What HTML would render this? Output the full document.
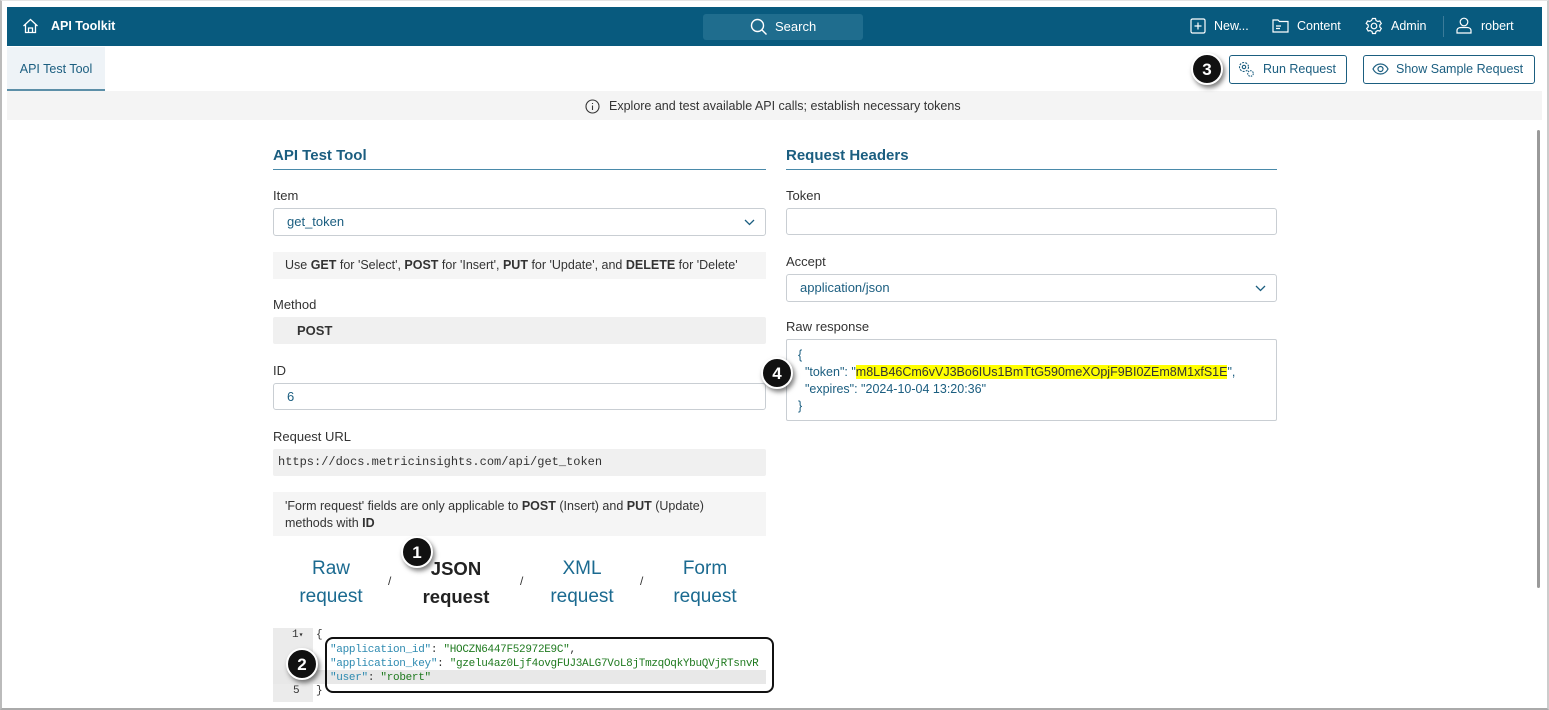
<!DOCTYPE html>
<html><head><meta charset="utf-8"><style>
*{box-sizing:border-box;margin:0;padding:0}
body{width:1549px;height:710px;overflow:hidden;background:#fff;font-family:"Liberation Sans",sans-serif;font-size:13px;color:#333;position:relative}
.a{position:absolute}
.frame{left:0;top:0;width:1549px;height:710px;border:1px solid #e4e4e4;border-left:2px solid #bbb;border-bottom:2px solid #aaa;border-right:2px solid #ccc}
.top{left:7px;top:7px;width:1535px;height:39px;background:#085a7e;color:#fff}
.lbl{font-size:13px;color:#333}
.inp{border:1px solid #c9ced3;border-radius:3px;background:#fff;height:28px;color:#1b5e80;padding-left:13px;line-height:26px}
.gray{background:#f0f0f0;border-radius:2px}
.note{background:#f5f5f5}
.h{font-size:15px;font-weight:bold;color:#1b5e80;border-bottom:1px solid #4a8aaa;padding-bottom:5px}
.badge{width:32px;height:32px;border-radius:50%;background:#111;color:#fff;font-size:17px;font-weight:bold;text-align:center;line-height:30px;border:2px solid #fff;box-shadow:2px 3px 5px rgba(0,0,0,.5)}
.btn{border:1px solid #1b5e80;border-radius:3px;height:29px;color:#1b5e80;font-size:13px;line-height:27px;background:#fff}
.tab{font-size:19px;color:#1b6a90;text-align:center;line-height:28px}
.mono{font-family:"Liberation Mono",monospace;font-size:11px}
</style></head><body>
<div class="a frame"></div>
<div class="a top">
 <svg class="a" style="left:15px;top:11px" width="17" height="16" viewBox="0 0 17 16" fill="none" stroke="#fff" stroke-width="1.3"><path d="M1.5 8 8.5 1.5 15.5 8M3.5 6.5V14.5H13.5V6.5M6.5 14.5V10H10.5V14.5"/></svg>
 <div class="a" style="left:44px;top:12px;font-weight:bold;font-size:12.5px">API Toolkit</div>
 <div class="a" style="left:696px;top:7px;width:160px;height:26px;background:#1f6d8e;border-radius:3px"></div>
 <svg class="a" style="left:743px;top:11px" width="18" height="18" viewBox="0 0 18 18" fill="none" stroke="#fff" stroke-width="1.4"><circle cx="7.5" cy="7.5" r="6"/><path d="M12 12 16.5 16.5"/></svg>
 <div class="a" style="left:768px;top:12px">Search</div>
 <svg class="a" style="left:1183px;top:11px" width="16" height="16" viewBox="0 0 16 16" fill="none" stroke="#fff" stroke-width="1.2"><rect x="1" y="1" width="14" height="14" rx="1.5"/><path d="M8 4.5V11.5M4.5 8H11.5"/></svg>
 <div class="a" style="left:1207px;top:12px;font-size:12.5px">New...</div>
 <svg class="a" style="left:1265px;top:11px" width="17" height="15" viewBox="0 0 17 15" fill="none" stroke="#fff" stroke-width="1.2"><path d="M1 2H6L7.5 3.5H16V14H1Z"/><path d="M4 8H9M4 10.5H8"/></svg>
 <div class="a" style="left:1290px;top:12px;font-size:12.5px">Content</div>
 <svg class="a" style="left:1358px;top:10px" width="18" height="18" viewBox="0 0 18 18" fill="none" stroke="#fff" stroke-width="1.2"><circle cx="9" cy="9" r="2.8"/><path d="M7.5 1.5h3l.5 2 1.8 1 2-.6 1.5 2.6-1.5 1.5v2l1.5 1.5-1.5 2.6-2-.6-1.8 1-.5 2h-3l-.5-2-1.8-1-2 .6-1.5-2.6 1.5-1.5v-2L1.2 6.5l1.5-2.6 2 .6 1.8-1z"/></svg>
 <div class="a" style="left:1384px;top:12px;font-size:12.5px">Admin</div>
 <div class="a" style="left:1436px;top:9px;width:1px;height:21px;background:#3b7b99"></div>
 <svg class="a" style="left:1449px;top:10px" width="16" height="17" viewBox="0 0 16 17" fill="none" stroke="#fff" stroke-width="1.2"><circle cx="8" cy="5" r="3.8"/><path d="M1 16V13.5C1 11.5 3 10.5 5 10.5H11C13 10.5 15 11.5 15 13.5V16Z"/></svg>
 <div class="a" style="left:1474px;top:12px;font-size:12.5px">robert</div>
</div>
<div class="a" style="left:7px;top:47px;width:98px;height:44px;background:#eef3f7;border-bottom:2px solid #5c8fa8;color:#1b5e80;font-size:12.5px;line-height:45px;text-align:center">API Test Tool</div>
<div class="a" style="left:7px;top:91px;width:1535px;height:29px;background:#f4f4f4"></div>
<svg class="a" style="left:585px;top:99px" width="15" height="15" viewBox="0 0 15 15" fill="none" stroke="#333" stroke-width="1.1"><circle cx="7.5" cy="7.5" r="6.5"/><path d="M7.5 6.5V11M7.5 4V5"/></svg>
<div class="a" style="left:609px;top:99px;font-size:12.5px;color:#333">Explore and test available API calls; establish necessary tokens</div>
<div class="a badge" style="left:1191px;top:53px">3</div>
<div class="a btn" style="left:1229px;top:55px;width:118px"><svg class="a" style="left:8px;top:5px" width="17" height="17" viewBox="0 0 17 17" fill="none" stroke="#1b5e80" stroke-width="1.1"><circle cx="6" cy="6" r="4.5" stroke-dasharray="2 1.2"/><circle cx="6" cy="6" r="1.7"/><circle cx="12.5" cy="12.5" r="2.8" stroke-dasharray="1.5 1"/></svg><span class="a" style="left:33px;font-size:12.5px">Run Request</span></div>
<div class="a btn" style="left:1363px;top:55px;width:172px"><svg class="a" style="left:8px;top:7px" width="17" height="12" viewBox="0 0 17 12" fill="none" stroke="#1b5e80" stroke-width="1.2"><path d="M1 6C3 2 6 1 8.5 1S14 2 16 6C14 10 11 11 8.5 11S3 10 1 6Z"/><circle cx="8.5" cy="6" r="2.5"/></svg><span class="a" style="left:32px;font-size:12.5px">Show Sample Request</span></div>
<div class="a" style="left:1537px;top:130px;width:3px;height:458px;background:#9a9a9a;border-radius:2px"></div>

<div class="a h" style="left:273px;top:147px;width:493px">API Test Tool</div>
<div class="a lbl" style="left:273px;top:188px">Item</div>
<div class="a inp" style="left:273px;top:208px;width:493px">get_token<svg class="a" style="right:10px;top:10px" width="11" height="7" viewBox="0 0 11 7" fill="none" stroke="#1b5e80" stroke-width="1.3"><path d="M1 1 5.5 5.5 10 1"/></svg></div>
<div class="a note" style="left:273px;top:252px;width:493px;height:27px;padding:6px 12px;font-size:12.5px;white-space:nowrap">Use <b>GET</b> for 'Select', <b>POST</b> for 'Insert', <b>PUT</b> for 'Update', and <b>DELETE</b> for 'Delete'</div>
<div class="a lbl" style="left:273px;top:297px">Method</div>
<div class="a gray" style="left:273px;top:317px;width:493px;height:27px;padding:6px 24px;font-weight:bold">POST</div>
<div class="a lbl" style="left:273px;top:363px">ID</div>
<div class="a inp" style="left:273px;top:383px;width:493px;height:27px;line-height:25px">6</div>
<div class="a lbl" style="left:273px;top:429px">Request URL</div>
<div class="a gray" style="left:273px;top:449px;width:493px;height:27px;padding:6px 5px;font-family:'Liberation Mono',monospace;font-size:12px;color:#333">https://docs.metricinsights.com/api/get_token</div>
<div class="a note" style="left:273px;top:492px;width:493px;height:44px;padding:6px 12px;font-size:12.5px;line-height:17px">'Form request' fields are only applicable to <b>POST</b> (Insert) and <b>PUT</b> (Update)<br>methods with <b>ID</b></div>
<div class="a tab" style="left:286px;top:555px;width:90px">Raw<br>request</div>
<div class="a" style="left:388px;top:574px;font-size:12px">/</div>
<div class="a tab" style="left:405px;top:555px;width:102px;color:#222;font-weight:bold;font-size:18.5px">JSON<br>request</div>
<div class="a" style="left:520px;top:574px;font-size:12px">/</div>
<div class="a tab" style="left:537px;top:555px;width:90px">XML<br>request</div>
<div class="a" style="left:640px;top:574px;font-size:12px">/</div>
<div class="a tab" style="left:660px;top:555px;width:90px">Form<br>request</div>
<div class="a badge" style="left:401px;top:536px">1</div>
<div class="a" style="left:273px;top:628px;width:40px;height:74px;background:#ebebeb"></div>
<div class="a" style="left:273px;top:670px;width:493px;height:14px;background:#e8e8e8"></div>
<div class="a mono" style="left:292px;top:629px;color:#333">1<span style="font-size:8px">▾</span></div>
<div class="a mono" style="left:293px;top:685px;color:#333">5</div>
<div class="a mono" style="left:316px;top:629px">{</div>
<div class="a mono" style="left:316px;top:685px">}</div>
<div class="a mono" style="left:330px;top:643px;line-height:14px;white-space:nowrap;width:436px;overflow:hidden;letter-spacing:-0.3px">
<div><span style="color:#2d8ab0">"application_id"</span>: <span style="color:#1f7a1f">"HOCZN6447F52972E9C"</span>,</div>
<div><span style="color:#2d8ab0">"application_key"</span>: <span style="color:#1f7a1f">"gzelu4az0Ljf4ovgFUJ3ALG7VoL8jTmzqOqkYbuQVjRTsnvR</span></div>
<div><span style="color:#2d8ab0">"user"</span>: <span style="color:#1f7a1f">"robert"</span></div>
</div>
<div class="a" style="left:325px;top:637px;width:449px;height:56px;border:2px solid #111;border-radius:8px"></div>
<div class="a badge" style="left:286px;top:648px">2</div>

<div class="a h" style="left:786px;top:147px;width:491px">Request Headers</div>
<div class="a lbl" style="left:786px;top:188px">Token</div>
<div class="a inp" style="left:786px;top:208px;width:491px;height:27px"></div>
<div class="a lbl" style="left:786px;top:254px">Accept</div>
<div class="a inp" style="left:786px;top:274px;width:491px">application/json<svg class="a" style="right:10px;top:10px" width="11" height="7" viewBox="0 0 11 7" fill="none" stroke="#1b5e80" stroke-width="1.3"><path d="M1 1 5.5 5.5 10 1"/></svg></div>
<div class="a lbl" style="left:786px;top:319px">Raw response</div>
<div class="a" style="left:786px;top:339px;width:491px;height:82px;border:1px solid #c9ced3;border-radius:2px;padding:7px 11px;color:#1b5e80;font-size:12.5px;line-height:17px;white-space:nowrap">{<br>&nbsp;&nbsp;"token": "<span style="background:#ffff00;color:#333">m8LB46Cm6vVJ3Bo6IUs1BmTtG590meXOpjF9BI0ZEm8M1xfS1E</span>",<br>&nbsp;&nbsp;"expires": "2024-10-04 13:20:36"<br>}</div>
<div class="a badge" style="left:761px;top:357px">4</div>
</body></html>
